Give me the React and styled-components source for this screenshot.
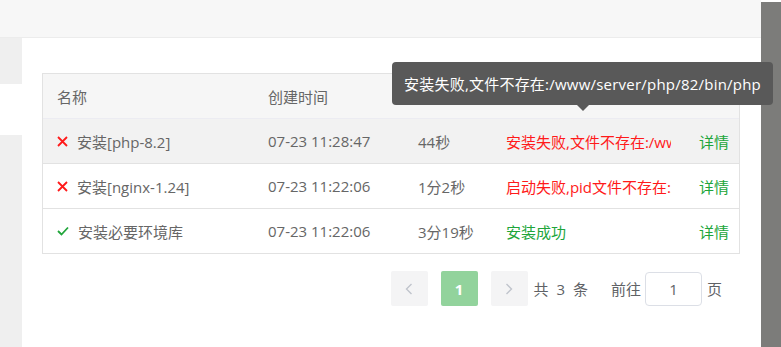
import React from "react";
import styled, { createGlobalStyle } from "styled-components";

const GlobalStyle = createGlobalStyle`
  html, body { margin: 0; padding: 0; background: #fff; overflow: hidden; }
  body {
    font-family: "Open Sans", "Noto Sans CJK SC", "Noto Sans", sans-serif;
    font-size: 15px;
    color: #666;
  }
`;

const Page = styled.div`
  display: flex;
  width: 781px;
  height: 347px;
  position: relative;
`;

const Main = styled.div`
  width: 761px;
  display: flex;
  flex-direction: column;
`;

const Overlay = styled.div`
  flex: 1;
  background: #7c7c7a;
  margin-top: 2px;
`;

const TopBar = styled.div`
  height: 37px;
  background: #f7f7f7;
  border-bottom: 1px solid #ececec;
`;

const Body = styled.div`
  flex: 1;
  display: flex;
`;

const SideStrip = styled.div`
  width: 22px;
  display: flex;
  flex-direction: column;
`;

const StripPart = styled.div`
  height: ${(p) => p.$h || "auto"};
  flex: ${(p) => (p.$h ? "none" : 1)};
  background: ${(p) => (p.$light ? "#fff" : "#efefef")};
`;

const Panel = styled.div`
  flex: 1;
  padding: 35px 0 0 20px;
`;

const Table = styled.div`
  width: 698px;
  border: 1px solid #e2e2e2;
  box-sizing: border-box;
`;

const Row = styled.div`
  display: grid;
  grid-template-columns: 211px 150px 88px 193px 1fr;
  height: 44px;
  align-items: center;
  background: ${(p) => (p.$head ? "#f6f6f6" : p.$hover ? "#f2f2f2" : "#fff")};
  border-top: ${(p) => (p.$first ? "none" : p.$afterHead ? "1px solid #ececf2" : "1px solid #e2e2e2")};
`;

const Cell = styled.div`
  padding: 0 14px;
  min-width: 0;
  white-space: nowrap;
  overflow: hidden;
  color: ${(p) => (p.$tone === "red" ? "#ff1a1a" : p.$tone === "green" ? "#20a53a" : "#666")};
  display: flex;
  align-items: center;
  gap: 9px;
`;

const Clip = styled.span`
  flex: 0 1 auto;
  min-width: 0;
  overflow: hidden;
  white-space: nowrap;
`;

const Pager = styled.div`
  display: flex;
  align-items: center;
  width: 698px;
  justify-content: flex-end;
  margin-top: 17px;
  padding-right: 18px;
  box-sizing: border-box;
`;

const PageBtn = styled.div`
  width: 37px;
  height: 35px;
  border-radius: 2px;
  margin-right: ${(p) => (p.$gap ? "13px" : "6px")};
  background: ${(p) => (p.$active ? "#92d39c" : "#f4f4f5")};
  color: ${(p) => (p.$active ? "#fff" : "#c0c4cc")};
  font-weight: bold;
  font-size: 15px;
  display: flex;
  align-items: center;
  justify-content: center;
`;

const PagerText = styled.span`
  color: #606266;
  margin-right: ${(p) => p.$mr || "0"};
  letter-spacing: ${(p) => p.$ls || "0"};
`;

const JumpInput = styled.div`
  width: 57px;
  height: 34px;
  box-sizing: border-box;
  border: 1px solid #dcdfe6;
  border-radius: 4px;
  margin: 0 5px 0 4px;
  display: flex;
  align-items: center;
  justify-content: center;
  color: #606266;
`;

const Tooltip = styled.div`
  position: absolute;
  left: 392px;
  top: 62px;
  height: 43px;
  padding: 0 12px;
  display: flex;
  align-items: center;
  background: #595959;
  border-radius: 4px;
  color: #fff;
  letter-spacing: 0.22px;
  white-space: nowrap;
  &::after {
    content: "";
    position: absolute;
    left: 185px;
    bottom: -6px;
    border-left: 6px solid transparent;
    border-right: 6px solid transparent;
    border-top: 6px solid #595959;
  }
`;

const Cross = () => (
  <svg width="11" height="11" viewBox="0 0 11 11">
    <path d="M1 1 L10 10 M10 1 L1 10" stroke="#ff1a1a" strokeWidth="1.8" fill="none" />
  </svg>
);

const Check = () => (
  <svg width="12" height="10" viewBox="0 0 12 10">
    <path d="M1 5 L4.5 8.5 L11 1.5" stroke="#20a53a" strokeWidth="1.8" fill="none" />
  </svg>
);

const Chevron = ({ dir }) => (
  <svg width="8" height="12" viewBox="0 0 8 12">
    <path d={dir === "left" ? "M6.5 1 L1.5 6 L6.5 11" : "M1.5 1 L6.5 6 L1.5 11"} stroke="#c0c4cc" strokeWidth="1.4" fill="none" />
  </svg>
);

const rows = [
  { ok: false, name: "安装[php-8.2]", time: "07-23 11:28:47", cost: "44秒", msg: "安装失败,文件不存在:/www/server/php/82/bin/php", hover: true },
  { ok: false, name: "安装[nginx-1.24]", time: "07-23 11:22:06", cost: "1分2秒", msg: "启动失败,pid文件不存在:/www/server/nginx/logs/nginx.pid" },
  { ok: true, name: "安装必要环境库", time: "07-23 11:22:06", cost: "3分19秒", msg: "安装成功" },
];

export default function App() {
  return (
    <Page>
      <GlobalStyle />
      <Main>
        <TopBar />
        <Body>
          <SideStrip>
            <StripPart $h="46px" />
            <StripPart $h="51px" $light />
            <StripPart />
          </SideStrip>
          <Panel>
            <Table>
              <Row $head $first>
                <Cell>名称</Cell>
                <Cell>创建时间</Cell>
                <Cell>耗时</Cell>
                <Cell>状态</Cell>
                <Cell>操作</Cell>
              </Row>
              {rows.map((r, i) => (
                <Row key={r.name} $hover={r.hover} $afterHead={i === 0}>
                  <Cell>
                    {r.ok ? <Check /> : <Cross />}
                    {r.name}
                  </Cell>
                  <Cell>{r.time}</Cell>
                  <Cell>{r.cost}</Cell>
                  <Cell $tone={r.ok ? "green" : "red"}>
                    <Clip>{r.msg}</Clip>
                  </Cell>
                  <Cell $tone="green">详情</Cell>
                </Row>
              ))}
            </Table>
            <Pager>
              <PageBtn $gap><Chevron dir="left" /></PageBtn>
              <PageBtn $active $gap>1</PageBtn>
              <PageBtn><Chevron dir="right" /></PageBtn>
              <PagerText $mr="21px" $ls="2px">共 3 条</PagerText>
              <PagerText>前往</PagerText>
              <JumpInput>1</JumpInput>
              <PagerText>页</PagerText>
            </Pager>
          </Panel>
        </Body>
      </Main>
      <Overlay />
      <Tooltip>安装失败,文件不存在:/www/server/php/82/bin/php</Tooltip>
    </Page>
  );
}
